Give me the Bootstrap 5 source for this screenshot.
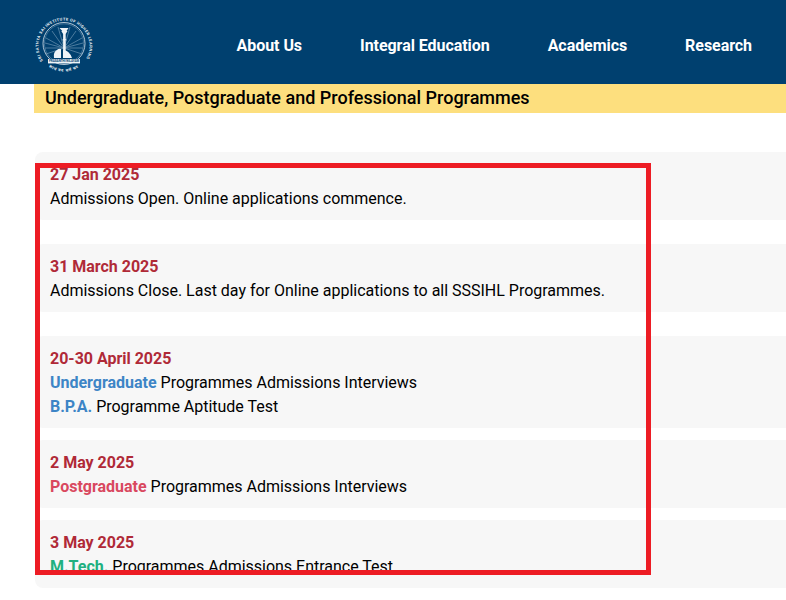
<!DOCTYPE html>
<html lang="en">
<head>
<meta charset="utf-8">
<title>Admissions</title>
<link href="https://cdn.jsdelivr.net/npm/bootstrap@5.3.0/dist/css/bootstrap.min.css" rel="stylesheet">
<style>
html, body { height: 600px; overflow: hidden; }
body { font-family: Roboto, "Liberation Sans", sans-serif; font-size: 16px; line-height: 24px; color: #000; background: #fff; position: relative; }
.site-nav { background: #00406f; height: 84px; padding: 0 34px 0 33px; }
.brand-logo { width: 60px; height: 60px; margin-top: 8px; display: block; }
.site-links { gap: 58px; margin: 8px 0 0; padding: 0; list-style: none; }
.site-links a { color: #fff; font-weight: 700; text-decoration: none; letter-spacing: -.055px; }
.page-band { margin-left: 34px; background: #fddf7e; height: 29px; padding-left: 11px; font-size: 18px; font-weight: 500; line-height: 28px; color: #000; }
.date-list { margin: 39px -12px 0 35px; letter-spacing: -.012px; }
.date-item { background: #f7f7f7; border-radius: 8px; padding: 11px 15px 9px; margin-bottom: 24px; }
.date-item.tight { margin-bottom: 12px; }
.date-when { color: #b02a37; font-weight: 700; }
.tag-blue { color: #3d85c6; font-weight: 700; }
.tag-rose { color: #d9485f; font-weight: 700; }
.tag-green { color: #20b080; font-weight: 700; }
.red-frame { position: absolute; left: 35px; top: 163px; width: 616px; height: 412px; border: 5px solid #ed1c24; pointer-events: none; }
</style>
</head>
<body>
<nav class="site-nav d-flex justify-content-between align-items-center">
  <svg class="brand-logo" viewBox="0 0 60 60" role="img" aria-label="Institute seal">
    <defs>
      <path id="sealArc" d="M10.1 44.6 A25.5 25.5 0 1 1 51.9 44.6"/>
      <path id="sealLow" d="M15 50.5 A27 27 0 0 0 47 50.5"/>
    </defs>
    <circle cx="31" cy="27.5" r="21" fill="none" stroke="#dfe8f0" stroke-width=".8"/>
    <circle cx="31" cy="27.5" r="19.6" fill="none" stroke="#8fb0c9" stroke-width=".4"/>
    <g stroke="#7fa3be" stroke-width=".6">
      <path d="M31 32 L13 22 M31 32 L12 27 M31 32 L12 32 M31 32 L13 38 M31 32 L49 22 M31 32 L50 27 M31 32 L50 32 M31 32 L49 38 M31 32 L19 15 M31 32 L43 15 M31 32 L25 11 M31 32 L37 11"/>
    </g>
    <path d="M26.5 12 h9 l-2 3 h1 l-1.8 3 v5 l1 1.2 h-1 v13 h-2.6 v-13 h-1 l1-1.2 v-5 l-1.8-3 h1z" fill="#eef3f7"/>
    <path d="M21 42 q-1-6 3-8 q2-2 4-1 v9z M30 42 v-8 q6 0 9 8z" fill="#eef3f7"/>
    <rect x="15" y="43" width="32" height="4.4" fill="#eef3f7"/>
    <text x="31" y="46.3" text-anchor="middle" font-family="Roboto, sans-serif" font-size="3" font-weight="700" fill="#00406f">PRASANTHI NILAYAM</text>
    <text font-family="Roboto, sans-serif" font-size="3.9" font-weight="700" fill="#f2f6f9"><textPath href="#sealArc" textLength="108" lengthAdjust="spacing">SRI SATHYA SAI INSTITUTE OF HIGHER LEARNING</textPath></text>
    <text font-family="'Noto Sans', sans-serif" font-size="4" font-weight="700" fill="#f2f6f9" letter-spacing=".6"><textPath href="#sealLow" startOffset="1">सत्यं वद धर्मं चर</textPath></text>
  </svg>
  <ul class="site-links d-flex">
    <li><a href="#">About Us</a></li>
    <li><a href="#">Integral Education</a></li>
    <li><a href="#">Academics</a></li>
    <li><a href="#">Research</a></li>
  </ul>
</nav>
<div class="page-band">Undergraduate, Postgraduate and Professional Programmes</div>
<div class="date-list">
  <div class="date-item">
    <div class="date-when">27 Jan 2025</div>
    <div>Admissions Open. Online applications commence.</div>
  </div>
  <div class="date-item">
    <div class="date-when">31 March 2025</div>
    <div>Admissions Close. Last day for Online applications to all SSSIHL Programmes.</div>
  </div>
  <div class="date-item tight">
    <div class="date-when">20-30 April 2025</div>
    <div><span class="tag-blue">Undergraduate</span> Programmes Admissions Interviews</div>
    <div><span class="tag-blue">B.P.A.</span> Programme Aptitude Test</div>
  </div>
  <div class="date-item tight">
    <div class="date-when">2 May 2025</div>
    <div><span class="tag-rose">Postgraduate</span> Programmes Admissions Interviews</div>
  </div>
  <div class="date-item tight">
    <div class="date-when">3 May 2025</div>
    <div><span class="tag-green">M.Tech.</span> Programmes Admissions Entrance Test</div>
  </div>
</div>
<div class="red-frame"></div>
<script src="https://cdn.jsdelivr.net/npm/bootstrap@5.3.0/dist/js/bootstrap.bundle.min.js"></script>
</body>
</html>
